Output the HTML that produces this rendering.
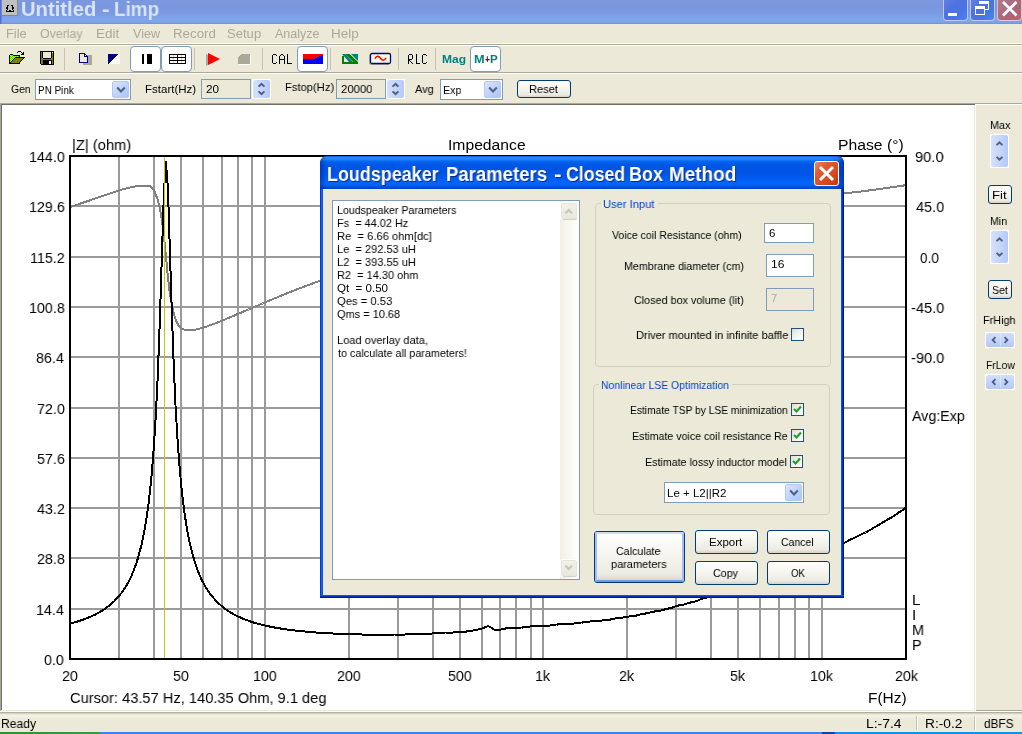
<!DOCTYPE html>
<html>
<head>
<meta charset="utf-8">
<title>Untitled - Limp</title>
<style>
html,body{margin:0;padding:0;background:#ece9d8;overflow:hidden;}
body{width:1022px;height:734px;position:relative;font-family:"Liberation Sans",sans-serif;}
#root{position:absolute;left:0;top:0;width:1022px;height:734px;overflow:hidden;background:#ece9d8;}
.t{position:absolute;white-space:pre;will-change:transform;line-height:20px;height:20px;font-family:"Liberation Sans",sans-serif;}
.abs{position:absolute;}
svg{position:absolute;overflow:visible;}
.btn{position:absolute;box-sizing:border-box;border:1px solid #003c74;border-radius:3px;background:linear-gradient(to bottom,#ffffff 0%,#f6f5ef 45%,#ecebe2 85%,#d6d0c5 100%);}
.edit{position:absolute;box-sizing:border-box;border:1px solid #7f9db9;background:#fff;}
.grp{position:absolute;box-sizing:border-box;border:1px solid #d0d0bf;border-radius:4px;}
.chk{position:absolute;box-sizing:border-box;width:13px;height:13px;border:1px solid #1c5180;background:linear-gradient(135deg,#dcdcd7 0%,#f3f3ef 50%,#ffffff 100%);}
.dd{position:absolute;box-sizing:border-box;border:1px solid #b4c8f6;border-radius:2px;background:linear-gradient(135deg,#dae4fc 0%,#c3d3fa 50%,#a9c6f7 100%);}
.spin{position:absolute;box-sizing:border-box;border-radius:2px;background:linear-gradient(to right,#d5e0fb 0%,#c3d3fa 60%,#b6c8f5 100%);}
</style>
</head>
<body>
<div id="root">
<div class="" style="position:absolute;left:0px;top:0px;width:1022px;height:24px;background:linear-gradient(to bottom,#7c98de 0%,#7a96dd 30%,#7b9ae2 55%,#80a6ea 80%,#7fa2e6 92%,#7391dc 100%);"></div>
<div class="" style="position:absolute;left:0px;top:0px;width:1px;height:24px;background:#5a6cd0;"></div>
<div class="" style="position:absolute;left:1px;top:0px;width:1px;height:24px;background:#6f88dc;"></div>
<div class="" style="position:absolute;left:2px;top:0px;width:16px;height:16px;background:#c0c0c0;border-right:1px solid #8c8c8c;border-bottom:1px solid #8a8678;box-sizing:border-box;"></div>
<svg style="left:6px;top:5px" width="8" height="7" viewBox="0 0 8 7" shape-rendering="crispEdges"><rect x="1" y="0" width="2" height="1" fill="#000"/><rect x="5" y="0" width="2" height="1" fill="#000"/><rect x="1" y="1" width="1" height="1" fill="#000"/><rect x="6" y="1" width="1" height="1" fill="#000"/><rect x="0" y="2" width="2" height="1" fill="#000"/><rect x="6" y="2" width="2" height="1" fill="#000"/><rect x="0" y="3" width="2" height="1" fill="#000"/><rect x="6" y="3" width="2" height="1" fill="#000"/><rect x="1" y="4" width="1" height="1" fill="#000"/><rect x="6" y="4" width="1" height="1" fill="#000"/><rect x="0" y="5" width="1" height="1" fill="#000"/><rect x="3" y="5" width="2" height="1" fill="#000"/><rect x="7" y="5" width="1" height="1" fill="#000"/><rect x="0" y="6" width="8" height="1" fill="#000"/></svg>
<div class="t " style="left:21.29px;top:-0.76px;font-size:19.5px;color:#d9e4f8;font-weight:bold;transform:scaleX(1.0371);transform-origin:0 0;">Untitled</div>
<div class="t " style="left:102.29px;top:-0.76px;font-size:19.5px;color:#d9e4f8;font-weight:bold;transform:scaleX(1.1664);transform-origin:0 0;">-</div>
<div class="t " style="left:113.97px;top:-0.76px;font-size:19.5px;color:#d9e4f8;font-weight:bold;transform:scaleX(0.9673);transform-origin:0 0;">Limp</div>
<div class="" style="position:absolute;left:943px;top:-5px;width:25px;height:26px;box-sizing:border-box;border:1px solid rgba(255,255,255,0.6);border-radius:4px;background:linear-gradient(135deg,#6484e6 0%,#4e72e0 40%,#4a74e4 70%,#4a82f0 100%);"></div>
<div class="" style="position:absolute;left:970px;top:-5px;width:25px;height:26px;box-sizing:border-box;border:1px solid rgba(255,255,255,0.6);border-radius:4px;background:linear-gradient(135deg,#6484e6 0%,#4e72e0 40%,#4a74e4 70%,#4a82f0 100%);"></div>
<div class="" style="position:absolute;left:997px;top:-5px;width:25px;height:26px;box-sizing:border-box;border:1px solid rgba(255,255,255,0.6);border-radius:4px;background:linear-gradient(135deg,#b47e92 0%,#b06c80 40%,#ac6476 70%,#b66a74 100%);"></div>
<svg style="left:943px;top:0" width="79" height="22" viewBox="0 0 79 22"><g shape-rendering="crispEdges" fill="#fff"><rect x="5" y="13" width="9" height="3"/><rect x="36" y="1" width="10" height="3"/><rect x="45" y="1" width="1" height="9"/><rect x="42" y="9" width="4" height="1"/><rect x="32" y="6" width="10" height="3"/><rect x="32" y="6" width="1" height="9"/><rect x="41" y="6" width="1" height="9"/><rect x="32" y="14" width="10" height="1"/></g><path d="M60 2L73.5 15.5M73.5 2L60 15.5" stroke="#fff" stroke-width="2.7" stroke-linecap="butt"/></svg>
<div class="t " style="left:5.98px;top:23.67px;font-size:12.5px;color:#aca899;transform:scaleX(1.0236);transform-origin:0 0;">File</div>
<div class="t " style="left:40.44px;top:23.67px;font-size:12.5px;color:#aca899;transform:scaleX(0.9882);transform-origin:0 0;">Overlay</div>
<div class="t " style="left:95.92px;top:23.67px;font-size:12.5px;color:#aca899;transform:scaleX(1.0765);transform-origin:0 0;">Edit</div>
<div class="t " style="left:132.94px;top:23.67px;font-size:12.5px;color:#aca899;transform:scaleX(1.0070);transform-origin:0 0;">View</div>
<div class="t " style="left:172.94px;top:23.67px;font-size:12.5px;color:#aca899;transform:scaleX(1.0649);transform-origin:0 0;">Record</div>
<div class="t " style="left:227.41px;top:23.67px;font-size:12.5px;color:#aca899;transform:scaleX(1.0455);transform-origin:0 0;">Setup</div>
<div class="t " style="left:275.00px;top:23.67px;font-size:12.5px;color:#aca899;transform:scaleX(1.0028);transform-origin:0 0;">Analyze</div>
<div class="t " style="left:330.93px;top:23.67px;font-size:12.5px;color:#aca899;transform:scaleX(1.0749);transform-origin:0 0;">Help</div>
<div class="" style="position:absolute;left:0px;top:43px;width:1022px;height:1px;background:#fff;"></div>
<div class="" style="position:absolute;left:0px;top:44px;width:1022px;height:1px;background:#aca899;"></div>
<div class="" style="position:absolute;left:0px;top:45px;width:1022px;height:1px;background:#fff;"></div>
<div class="" style="position:absolute;left:0px;top:72px;width:1022px;height:1px;background:#aca899;"></div>
<div class="" style="position:absolute;left:0px;top:73px;width:1022px;height:1px;background:#fff;"></div>
<svg style="left:9px;top:51px" width="16" height="13" viewBox="0 0 16 13" shape-rendering="crispEdges"><rect x="9" y="0" width="3" height="1" fill="#000"/><rect x="8" y="1" width="1" height="1" fill="#000"/><rect x="12" y="1" width="1" height="1" fill="#000"/><rect x="14" y="1" width="1" height="1" fill="#000"/><rect x="13" y="2" width="2" height="1" fill="#000"/><rect x="1" y="3" width="3" height="1" fill="#000"/><rect x="12" y="3" width="3" height="1" fill="#000"/><rect x="0" y="4" width="1" height="1" fill="#000"/><rect x="1" y="4" width="1" height="1" fill="#ffff00"/><rect x="2" y="4" width="1" height="1" fill="#00ff00"/><rect x="3" y="4" width="1" height="1" fill="#ffff00"/><rect x="4" y="4" width="7" height="1" fill="#000"/><rect x="0" y="5" width="1" height="1" fill="#000"/><rect x="1" y="5" width="1" height="1" fill="#00ff00"/><rect x="2" y="5" width="1" height="1" fill="#ffff00"/><rect x="3" y="5" width="1" height="1" fill="#00ff00"/><rect x="4" y="5" width="1" height="1" fill="#ffff00"/><rect x="5" y="5" width="1" height="1" fill="#00ff00"/><rect x="6" y="5" width="1" height="1" fill="#ffff00"/><rect x="7" y="5" width="1" height="1" fill="#00ff00"/><rect x="8" y="5" width="1" height="1" fill="#ffff00"/><rect x="9" y="5" width="1" height="1" fill="#00ff00"/><rect x="10" y="5" width="1" height="1" fill="#000"/><rect x="0" y="6" width="1" height="1" fill="#000"/><rect x="1" y="6" width="1" height="1" fill="#ffff00"/><rect x="2" y="6" width="1" height="1" fill="#00ff00"/><rect x="3" y="6" width="1" height="1" fill="#ffff00"/><rect x="4" y="6" width="1" height="1" fill="#00ff00"/><rect x="5" y="6" width="1" height="1" fill="#ffff00"/><rect x="6" y="6" width="10" height="1" fill="#000"/><rect x="0" y="7" width="1" height="1" fill="#000"/><rect x="1" y="7" width="1" height="1" fill="#00ff00"/><rect x="2" y="7" width="1" height="1" fill="#ffff00"/><rect x="3" y="7" width="1" height="1" fill="#00ff00"/><rect x="4" y="7" width="1" height="1" fill="#ffff00"/><rect x="5" y="7" width="1" height="1" fill="#000"/><rect x="6" y="7" width="8" height="1" fill="#808000"/><rect x="14" y="7" width="1" height="1" fill="#000"/><rect x="0" y="8" width="1" height="1" fill="#000"/><rect x="1" y="8" width="1" height="1" fill="#ffff00"/><rect x="2" y="8" width="1" height="1" fill="#00ff00"/><rect x="3" y="8" width="1" height="1" fill="#ffff00"/><rect x="4" y="8" width="1" height="1" fill="#000"/><rect x="5" y="8" width="8" height="1" fill="#808000"/><rect x="13" y="8" width="1" height="1" fill="#000"/><rect x="0" y="9" width="1" height="1" fill="#000"/><rect x="1" y="9" width="1" height="1" fill="#00ff00"/><rect x="2" y="9" width="1" height="1" fill="#ffff00"/><rect x="3" y="9" width="1" height="1" fill="#000"/><rect x="4" y="9" width="8" height="1" fill="#808000"/><rect x="12" y="9" width="1" height="1" fill="#000"/><rect x="0" y="10" width="1" height="1" fill="#000"/><rect x="1" y="10" width="1" height="1" fill="#ffff00"/><rect x="2" y="10" width="1" height="1" fill="#000"/><rect x="3" y="10" width="8" height="1" fill="#808000"/><rect x="11" y="10" width="1" height="1" fill="#000"/><rect x="0" y="11" width="2" height="1" fill="#000"/><rect x="2" y="11" width="8" height="1" fill="#808000"/><rect x="10" y="11" width="1" height="1" fill="#000"/><rect x="0" y="12" width="11" height="1" fill="#000"/></svg>
<svg style="left:40px;top:51px" width="14" height="14" viewBox="0 0 14 14" shape-rendering="crispEdges"><rect x="0" y="0" width="14" height="1" fill="#000"/><rect x="0" y="1" width="1" height="1" fill="#000"/><rect x="1" y="1" width="1" height="1" fill="#808000"/><rect x="2" y="1" width="1" height="1" fill="#000"/><rect x="11" y="1" width="1" height="1" fill="#000"/><rect x="12" y="1" width="1" height="1" fill="#fff"/><rect x="13" y="1" width="1" height="1" fill="#000"/><rect x="0" y="2" width="1" height="1" fill="#000"/><rect x="1" y="2" width="1" height="1" fill="#808000"/><rect x="2" y="2" width="1" height="1" fill="#000"/><rect x="11" y="2" width="1" height="1" fill="#000"/><rect x="12" y="2" width="1" height="1" fill="#808000"/><rect x="13" y="2" width="1" height="1" fill="#000"/><rect x="0" y="3" width="1" height="1" fill="#000"/><rect x="1" y="3" width="1" height="1" fill="#808000"/><rect x="2" y="3" width="1" height="1" fill="#000"/><rect x="11" y="3" width="1" height="1" fill="#000"/><rect x="12" y="3" width="1" height="1" fill="#808000"/><rect x="13" y="3" width="1" height="1" fill="#000"/><rect x="0" y="4" width="1" height="1" fill="#000"/><rect x="1" y="4" width="1" height="1" fill="#808000"/><rect x="2" y="4" width="1" height="1" fill="#000"/><rect x="11" y="4" width="1" height="1" fill="#000"/><rect x="12" y="4" width="1" height="1" fill="#808000"/><rect x="13" y="4" width="1" height="1" fill="#000"/><rect x="0" y="5" width="1" height="1" fill="#000"/><rect x="1" y="5" width="1" height="1" fill="#808000"/><rect x="2" y="5" width="1" height="1" fill="#000"/><rect x="11" y="5" width="1" height="1" fill="#000"/><rect x="12" y="5" width="1" height="1" fill="#808000"/><rect x="13" y="5" width="1" height="1" fill="#000"/><rect x="0" y="6" width="1" height="1" fill="#000"/><rect x="1" y="6" width="1" height="1" fill="#808000"/><rect x="2" y="6" width="1" height="1" fill="#000"/><rect x="11" y="6" width="1" height="1" fill="#000"/><rect x="12" y="6" width="1" height="1" fill="#808000"/><rect x="13" y="6" width="1" height="1" fill="#000"/><rect x="0" y="7" width="1" height="1" fill="#000"/><rect x="1" y="7" width="2" height="1" fill="#808000"/><rect x="3" y="7" width="8" height="1" fill="#000"/><rect x="11" y="7" width="2" height="1" fill="#808000"/><rect x="13" y="7" width="1" height="1" fill="#000"/><rect x="0" y="8" width="1" height="1" fill="#000"/><rect x="1" y="8" width="12" height="1" fill="#808000"/><rect x="13" y="8" width="1" height="1" fill="#000"/><rect x="0" y="9" width="1" height="1" fill="#000"/><rect x="1" y="9" width="2" height="1" fill="#808000"/><rect x="3" y="9" width="9" height="1" fill="#000"/><rect x="12" y="9" width="1" height="1" fill="#808000"/><rect x="13" y="9" width="1" height="1" fill="#000"/><rect x="0" y="10" width="1" height="1" fill="#000"/><rect x="1" y="10" width="2" height="1" fill="#808000"/><rect x="3" y="10" width="6" height="1" fill="#000"/><rect x="9" y="10" width="2" height="1" fill="#fff"/><rect x="11" y="10" width="1" height="1" fill="#000"/><rect x="12" y="10" width="1" height="1" fill="#808000"/><rect x="13" y="10" width="1" height="1" fill="#000"/><rect x="0" y="11" width="1" height="1" fill="#000"/><rect x="1" y="11" width="2" height="1" fill="#808000"/><rect x="3" y="11" width="6" height="1" fill="#000"/><rect x="9" y="11" width="2" height="1" fill="#fff"/><rect x="11" y="11" width="1" height="1" fill="#000"/><rect x="12" y="11" width="1" height="1" fill="#808000"/><rect x="13" y="11" width="1" height="1" fill="#000"/><rect x="0" y="12" width="1" height="1" fill="#000"/><rect x="1" y="12" width="2" height="1" fill="#808000"/><rect x="3" y="12" width="6" height="1" fill="#000"/><rect x="9" y="12" width="2" height="1" fill="#fff"/><rect x="11" y="12" width="1" height="1" fill="#000"/><rect x="12" y="12" width="1" height="1" fill="#808000"/><rect x="13" y="12" width="1" height="1" fill="#000"/><rect x="1" y="13" width="13" height="1" fill="#000"/></svg>
<div class="" style="position:absolute;left:64px;top:48px;width:1px;height:22px;background:#c5c2ae;"></div>
<svg style="left:79px;top:53px" width="13" height="12" viewBox="0 0 13 12" shape-rendering="crispEdges"><rect x="0" y="0" width="6" height="1" fill="#000080"/><rect x="0" y="1" width="1" height="1" fill="#000080"/><rect x="5" y="1" width="2" height="1" fill="#000080"/><rect x="0" y="2" width="1" height="1" fill="#000080"/><rect x="5" y="2" width="1" height="1" fill="#000080"/><rect x="7" y="2" width="1" height="1" fill="#000080"/><rect x="8" y="2" width="5" height="1" fill="#aca899"/><rect x="0" y="3" width="1" height="1" fill="#000080"/><rect x="5" y="3" width="4" height="1" fill="#000080"/><rect x="9" y="3" width="4" height="1" fill="#aca899"/><rect x="0" y="4" width="1" height="1" fill="#000080"/><rect x="8" y="4" width="1" height="1" fill="#000080"/><rect x="9" y="4" width="4" height="1" fill="#aca899"/><rect x="0" y="5" width="1" height="1" fill="#000080"/><rect x="8" y="5" width="1" height="1" fill="#000080"/><rect x="9" y="5" width="4" height="1" fill="#aca899"/><rect x="0" y="6" width="1" height="1" fill="#000080"/><rect x="8" y="6" width="1" height="1" fill="#000080"/><rect x="9" y="6" width="4" height="1" fill="#aca899"/><rect x="0" y="7" width="1" height="1" fill="#000080"/><rect x="8" y="7" width="1" height="1" fill="#000080"/><rect x="9" y="7" width="4" height="1" fill="#aca899"/><rect x="0" y="8" width="1" height="1" fill="#000080"/><rect x="8" y="8" width="1" height="1" fill="#000080"/><rect x="9" y="8" width="4" height="1" fill="#aca899"/><rect x="0" y="9" width="9" height="1" fill="#000080"/><rect x="9" y="9" width="4" height="1" fill="#aca899"/><rect x="4" y="10" width="9" height="1" fill="#aca899"/><rect x="4" y="11" width="9" height="1" fill="#aca899"/></svg>
<svg style="left:108px;top:54px" width="12" height="10" viewBox="0 0 12 10" shape-rendering="crispEdges"><rect width="12" height="10" fill="#fff"/><path d="M0 0H10L0 10Z" fill="#000080"/></svg>
<div class="" style="position:absolute;left:130px;top:46px;width:31px;height:26px;box-sizing:border-box;border:1px solid #7f9db9;border-radius:4px;background:#fff;"></div>
<div class="" style="position:absolute;left:161px;top:46px;width:31px;height:26px;box-sizing:border-box;border:1px solid #7f9db9;border-radius:4px;background:#fff;"></div>
<div class="" style="position:absolute;left:142px;top:54px;width:2px;height:10px;background:#000;"></div>
<div class="" style="position:absolute;left:147px;top:54px;width:5px;height:10px;background:#000;"></div>
<svg style="left:169px;top:54px" width="17" height="10" viewBox="0 0 17 10" shape-rendering="crispEdges"><rect x="0" y="0" width="17" height="1" fill="#000"/><rect x="0" y="1" width="1" height="1" fill="#000"/><rect x="1" y="1" width="3" height="1" fill="#fff"/><rect x="4" y="1" width="1" height="1" fill="#d8d4c0"/><rect x="5" y="1" width="3" height="1" fill="#fff"/><rect x="8" y="1" width="1" height="1" fill="#000"/><rect x="9" y="1" width="3" height="1" fill="#fff"/><rect x="12" y="1" width="1" height="1" fill="#d8d4c0"/><rect x="13" y="1" width="3" height="1" fill="#fff"/><rect x="16" y="1" width="1" height="1" fill="#000"/><rect x="0" y="2" width="1" height="1" fill="#000"/><rect x="1" y="2" width="3" height="1" fill="#fff"/><rect x="4" y="2" width="1" height="1" fill="#d8d4c0"/><rect x="5" y="2" width="3" height="1" fill="#fff"/><rect x="8" y="2" width="1" height="1" fill="#000"/><rect x="9" y="2" width="3" height="1" fill="#fff"/><rect x="12" y="2" width="1" height="1" fill="#d8d4c0"/><rect x="13" y="2" width="3" height="1" fill="#fff"/><rect x="16" y="2" width="1" height="1" fill="#000"/><rect x="0" y="3" width="17" height="1" fill="#000"/><rect x="0" y="4" width="1" height="1" fill="#000"/><rect x="1" y="4" width="3" height="1" fill="#fff"/><rect x="4" y="4" width="1" height="1" fill="#d8d4c0"/><rect x="5" y="4" width="3" height="1" fill="#fff"/><rect x="8" y="4" width="1" height="1" fill="#000"/><rect x="9" y="4" width="3" height="1" fill="#fff"/><rect x="12" y="4" width="1" height="1" fill="#d8d4c0"/><rect x="13" y="4" width="3" height="1" fill="#fff"/><rect x="16" y="4" width="1" height="1" fill="#000"/><rect x="0" y="5" width="1" height="1" fill="#000"/><rect x="1" y="5" width="3" height="1" fill="#fff"/><rect x="4" y="5" width="1" height="1" fill="#d8d4c0"/><rect x="5" y="5" width="3" height="1" fill="#fff"/><rect x="8" y="5" width="1" height="1" fill="#000"/><rect x="9" y="5" width="3" height="1" fill="#fff"/><rect x="12" y="5" width="1" height="1" fill="#d8d4c0"/><rect x="13" y="5" width="3" height="1" fill="#fff"/><rect x="16" y="5" width="1" height="1" fill="#000"/><rect x="0" y="6" width="17" height="1" fill="#000"/><rect x="0" y="7" width="1" height="1" fill="#000"/><rect x="1" y="7" width="3" height="1" fill="#fff"/><rect x="4" y="7" width="1" height="1" fill="#d8d4c0"/><rect x="5" y="7" width="3" height="1" fill="#fff"/><rect x="8" y="7" width="1" height="1" fill="#000"/><rect x="9" y="7" width="3" height="1" fill="#fff"/><rect x="12" y="7" width="1" height="1" fill="#d8d4c0"/><rect x="13" y="7" width="3" height="1" fill="#fff"/><rect x="16" y="7" width="1" height="1" fill="#000"/><rect x="0" y="8" width="1" height="1" fill="#000"/><rect x="1" y="8" width="3" height="1" fill="#fff"/><rect x="4" y="8" width="1" height="1" fill="#d8d4c0"/><rect x="5" y="8" width="3" height="1" fill="#fff"/><rect x="8" y="8" width="1" height="1" fill="#000"/><rect x="9" y="8" width="3" height="1" fill="#fff"/><rect x="12" y="8" width="1" height="1" fill="#d8d4c0"/><rect x="13" y="8" width="3" height="1" fill="#fff"/><rect x="16" y="8" width="1" height="1" fill="#000"/><rect x="0" y="9" width="17" height="1" fill="#000"/></svg>
<div class="" style="position:absolute;left:194px;top:48px;width:1px;height:22px;background:#c5c2ae;"></div>
<svg style="left:204px;top:52px" width="18" height="15" viewBox="0 0 18 15"><path d="M2 2L14 8L2 14Z" fill="#aca899"/><path d="M4 1L16 7L4 13Z" fill="#ff0000"/></svg>
<svg style="left:238px;top:54px" width="14" height="12" viewBox="0 0 14 12" shape-rendering="crispEdges"><path d="M4 1H13V11H1V4Z" fill="#fff"/><path d="M3 0H12V10H0V3Z" fill="#aca899"/></svg>
<div class="" style="position:absolute;left:262px;top:48px;width:1px;height:22px;background:#c5c2ae;"></div>
<svg style="left:272px;top:54px" width="5" height="10" viewBox="0 0 5 10" shape-rendering="crispEdges"><rect x="1" y="0" width="3" height="1" fill="#000"/><rect x="0" y="1" width="1" height="1" fill="#000"/><rect x="4" y="1" width="1" height="1" fill="#000"/><rect x="0" y="2" width="1" height="1" fill="#000"/><rect x="0" y="3" width="1" height="1" fill="#000"/><rect x="0" y="4" width="1" height="1" fill="#000"/><rect x="0" y="5" width="1" height="1" fill="#000"/><rect x="0" y="6" width="1" height="1" fill="#000"/><rect x="0" y="7" width="1" height="1" fill="#000"/><rect x="0" y="8" width="1" height="1" fill="#000"/><rect x="4" y="8" width="1" height="1" fill="#000"/><rect x="1" y="9" width="3" height="1" fill="#000"/></svg>
<svg style="left:279px;top:54px" width="6" height="10" viewBox="0 0 6 10" shape-rendering="crispEdges"><rect x="2" y="0" width="2" height="1" fill="#000"/><rect x="1" y="1" width="1" height="1" fill="#000"/><rect x="4" y="1" width="1" height="1" fill="#000"/><rect x="0" y="2" width="1" height="1" fill="#000"/><rect x="5" y="2" width="1" height="1" fill="#000"/><rect x="0" y="3" width="1" height="1" fill="#000"/><rect x="5" y="3" width="1" height="1" fill="#000"/><rect x="0" y="4" width="1" height="1" fill="#000"/><rect x="5" y="4" width="1" height="1" fill="#000"/><rect x="0" y="5" width="6" height="1" fill="#000"/><rect x="0" y="6" width="1" height="1" fill="#000"/><rect x="5" y="6" width="1" height="1" fill="#000"/><rect x="0" y="7" width="1" height="1" fill="#000"/><rect x="5" y="7" width="1" height="1" fill="#000"/><rect x="0" y="8" width="1" height="1" fill="#000"/><rect x="5" y="8" width="1" height="1" fill="#000"/><rect x="0" y="9" width="1" height="1" fill="#000"/><rect x="5" y="9" width="1" height="1" fill="#000"/></svg>
<svg style="left:287px;top:54px" width="5" height="10" viewBox="0 0 5 10" shape-rendering="crispEdges"><rect x="0" y="0" width="1" height="1" fill="#000"/><rect x="0" y="1" width="1" height="1" fill="#000"/><rect x="0" y="2" width="1" height="1" fill="#000"/><rect x="0" y="3" width="1" height="1" fill="#000"/><rect x="0" y="4" width="1" height="1" fill="#000"/><rect x="0" y="5" width="1" height="1" fill="#000"/><rect x="0" y="6" width="1" height="1" fill="#000"/><rect x="0" y="7" width="1" height="1" fill="#000"/><rect x="0" y="8" width="1" height="1" fill="#000"/><rect x="0" y="9" width="5" height="1" fill="#000"/></svg>
<div class="" style="position:absolute;left:297px;top:46px;width:31px;height:26px;box-sizing:border-box;border:1px solid #7f9db9;border-radius:4px;background:#fff;"></div>
<svg style="left:303px;top:54px" width="20" height="10" viewBox="0 0 20 10" shape-rendering="crispEdges"><rect width="20" height="10" fill="#0000ff"/><path d="M0 0H20V1H18V2H16V3H14V4H12V5H0Z" fill="#ff0000"/></svg>
<div class="" style="position:absolute;left:330px;top:48px;width:1px;height:22px;background:#c5c2ae;"></div>
<svg style="left:342px;top:54px" width="16" height="10" viewBox="0 0 16 10"><path d="M9 0H16V7Z" fill="#008080"/><path d="M0 0H3.5L11 8H7Z" fill="#008080"/><path d="M3.5 0H7.5L16 8V10H13.5Z" fill="#008000"/><rect x="0" y="2" width="2" height="8" fill="#008000"/><rect x="0" y="8" width="16" height="2" fill="#008000"/></svg>
<svg style="left:368px;top:52px" width="24" height="14" viewBox="0 0 24 14"><rect x="1.5" y="2.5" width="20" height="10" rx="1.5" fill="none" stroke="#aca899" stroke-width="1"/><rect x="2.5" y="1.5" width="20" height="10" rx="1.5" fill="#fbfbe6" stroke="#00008a" stroke-width="1.3"/><path d="M7 6.8C8.5 3.5 10.5 3.5 12.5 6.2S16.5 9 18 5.8" fill="none" stroke="#ff0000" stroke-width="1.5"/></svg>
<div class="" style="position:absolute;left:398px;top:48px;width:1px;height:22px;background:#c5c2ae;"></div>
<svg style="left:408px;top:54px" width="5" height="10" viewBox="0 0 5 10" shape-rendering="crispEdges"><rect x="1" y="0" width="3" height="1" fill="#000"/><rect x="0" y="1" width="1" height="1" fill="#000"/><rect x="4" y="1" width="1" height="1" fill="#000"/><rect x="0" y="2" width="1" height="1" fill="#000"/><rect x="4" y="2" width="1" height="1" fill="#000"/><rect x="0" y="3" width="1" height="1" fill="#000"/><rect x="4" y="3" width="1" height="1" fill="#000"/><rect x="0" y="4" width="1" height="1" fill="#000"/><rect x="4" y="4" width="1" height="1" fill="#000"/><rect x="0" y="5" width="4" height="1" fill="#000"/><rect x="0" y="6" width="2" height="1" fill="#000"/><rect x="0" y="7" width="1" height="1" fill="#000"/><rect x="2" y="7" width="1" height="1" fill="#000"/><rect x="0" y="8" width="1" height="1" fill="#000"/><rect x="3" y="8" width="1" height="1" fill="#000"/><rect x="0" y="9" width="1" height="1" fill="#000"/><rect x="4" y="9" width="1" height="1" fill="#000"/></svg>
<svg style="left:416px;top:54px" width="4" height="10" viewBox="0 0 4 10" shape-rendering="crispEdges"><rect x="0" y="0" width="1" height="1" fill="#000"/><rect x="0" y="1" width="1" height="1" fill="#000"/><rect x="0" y="2" width="1" height="1" fill="#000"/><rect x="0" y="3" width="1" height="1" fill="#000"/><rect x="0" y="4" width="1" height="1" fill="#000"/><rect x="0" y="5" width="1" height="1" fill="#000"/><rect x="0" y="6" width="1" height="1" fill="#000"/><rect x="0" y="7" width="1" height="1" fill="#000"/><rect x="0" y="8" width="1" height="1" fill="#000"/><rect x="0" y="9" width="4" height="1" fill="#000"/></svg>
<svg style="left:422px;top:54px" width="5" height="10" viewBox="0 0 5 10" shape-rendering="crispEdges"><rect x="1" y="0" width="3" height="1" fill="#000"/><rect x="0" y="1" width="1" height="1" fill="#000"/><rect x="4" y="1" width="1" height="1" fill="#000"/><rect x="0" y="2" width="1" height="1" fill="#000"/><rect x="0" y="3" width="1" height="1" fill="#000"/><rect x="0" y="4" width="1" height="1" fill="#000"/><rect x="0" y="5" width="1" height="1" fill="#000"/><rect x="0" y="6" width="1" height="1" fill="#000"/><rect x="0" y="7" width="1" height="1" fill="#000"/><rect x="0" y="8" width="1" height="1" fill="#000"/><rect x="4" y="8" width="1" height="1" fill="#000"/><rect x="1" y="9" width="3" height="1" fill="#000"/></svg>
<div class="" style="position:absolute;left:435px;top:48px;width:1px;height:22px;background:#c5c2ae;"></div>
<div class="t " style="left:442.22px;top:49.01px;font-size:11.5px;color:#008080;font-weight:bold;transform:scaleX(1.0463);transform-origin:0 0;">Mag</div>
<div class="" style="position:absolute;left:470px;top:46px;width:31px;height:26px;box-sizing:border-box;border:1px solid #7f9db9;border-radius:4px;background:#fff;"></div>
<div class="t " style="left:474.17px;top:49.01px;font-size:11.5px;color:#008080;font-weight:bold;transform:scaleX(1.1056);transform-origin:0 0;">M</div>
<div class="t " style="left:484.65px;top:49.01px;font-size:11.5px;color:#800000;font-weight:bold;transform:scaleX(0.7576);transform-origin:0 0;">+</div>
<div class="t " style="left:489.65px;top:49.01px;font-size:11.5px;color:#008080;font-weight:bold;transform:scaleX(1.0069);transform-origin:0 0;">P</div>
<div class="t " style="left:11.48px;top:79.01px;font-size:11.5px;color:#000;transform:scaleX(0.9063);transform-origin:0 0;">Gen</div>
<div class="edit" style="left:35px;top:79px;width:96px;height:21px"></div>
<div class="dd" style="left:112px;top:81px;width:17px;height:17px"></div>
<svg style="left:115.5px;top:86.0px" width="10" height="8" viewBox="0 0 10 8"><path d="M1.2 1.6L5 5.4L8.8 1.6" fill="none" stroke="#4d6185" stroke-width="2.1"/></svg>
<div class="t " style="left:37.71px;top:80.01px;font-size:11.5px;color:#000;transform:scaleX(0.8622);transform-origin:0 0;">PN Pink</div>
<div class="t " style="left:145.08px;top:79.01px;font-size:11.5px;color:#000;transform:scaleX(1.0010);transform-origin:0 0;">Fstart(Hz)</div>
<div class="edit" style="left:201px;top:79px;width:50px;height:20px;background:#ece9d8"></div>
<div class="t " style="left:205.91px;top:79.01px;font-size:11.5px;color:#000;transform:scaleX(1.0180);transform-origin:0 0;">20</div>
<div class="" style="position:absolute;left:252px;top:79px;width:19px;height:20px;background:#fff;"></div>
<div class="spin" style="left:253px;top:80px;width:17px;height:18px;"></div>
<svg style="left:0;top:0" width="1022" height="734" viewBox="0 0 1022 734"><path d="M257.90 86.00L259.20 87.30L261.50 85.20L263.80 87.30L265.10 86.00L261.50 82.50Z" fill="#4d6185"/><path d="M257.90 92.00L259.20 90.70L261.50 92.80L263.80 90.70L265.10 92.00L261.50 95.50Z" fill="#4d6185"/></svg>
<div class="t " style="left:285.10px;top:77.01px;font-size:11.5px;color:#000;transform:scaleX(0.9730);transform-origin:0 0;">Fstop(Hz)</div>
<div class="edit" style="left:336px;top:79px;width:50px;height:20px;background:#ece9d8"></div>
<div class="t " style="left:341.43px;top:79.01px;font-size:11.5px;color:#000;transform:scaleX(0.9841);transform-origin:0 0;">20000</div>
<div class="" style="position:absolute;left:386px;top:79px;width:19px;height:20px;background:#fff;"></div>
<div class="spin" style="left:387px;top:80px;width:17px;height:18px;"></div>
<svg style="left:0;top:0" width="1022" height="734" viewBox="0 0 1022 734"><path d="M391.90 86.00L393.20 87.30L395.50 85.20L397.80 87.30L399.10 86.00L395.50 82.50Z" fill="#4d6185"/><path d="M391.90 92.00L393.20 90.70L395.50 92.80L397.80 90.70L399.10 92.00L395.50 95.50Z" fill="#4d6185"/></svg>
<div class="t " style="left:415.00px;top:79.01px;font-size:11.5px;color:#000;transform:scaleX(0.9544);transform-origin:0 0;">Avg</div>
<div class="edit" style="left:440px;top:79px;width:63px;height:21px"></div>
<div class="dd" style="left:484px;top:81px;width:17px;height:17px"></div>
<svg style="left:487.5px;top:86.0px" width="10" height="8" viewBox="0 0 10 8"><path d="M1.2 1.6L5 5.4L8.8 1.6" fill="none" stroke="#4d6185" stroke-width="2.1"/></svg>
<div class="t " style="left:443.15px;top:80.01px;font-size:11.5px;color:#000;transform:scaleX(0.9239);transform-origin:0 0;">Exp</div>
<div class="btn" style="left:517px;top:80px;width:54px;height:18px"></div>
<div class="t " style="left:528.61px;top:79.01px;font-size:11.5px;color:#000;transform:scaleX(0.9643);transform-origin:0 0;">Reset</div>
<div class="" style="position:absolute;left:0px;top:103px;width:976px;height:1px;background:#aca899;"></div>
<div class="" style="position:absolute;left:0px;top:104px;width:975px;height:1px;background:#716f64;"></div>
<div class="" style="position:absolute;left:0px;top:104px;width:1px;height:607px;background:#aca899;"></div>
<div class="" style="position:absolute;left:1px;top:104px;width:1px;height:606px;background:#716f64;"></div>
<div class="" style="position:absolute;left:2px;top:105px;width:972px;height:605px;background:#fff;"></div>
<div class="" style="position:absolute;left:975px;top:104px;width:1px;height:607px;background:#fff;"></div>
<div class="" style="position:absolute;left:1px;top:710px;width:974px;height:1px;background:#ece9d8;"></div>
<div class="" style="position:absolute;left:0px;top:711px;width:1022px;height:1px;background:#fff;"></div>
<div class="" style="position:absolute;left:976px;top:103px;width:46px;height:1px;background:#aca899;"></div>
<div class="" style="position:absolute;left:976px;top:104px;width:46px;height:1px;background:#fff;"></div>
<div class="" style="position:absolute;left:976px;top:710px;width:46px;height:1px;background:#aca899;"></div>
<svg style="left:0;top:0" width="1022" height="734" viewBox="0 0 1022 734"><g shape-rendering="crispEdges" fill="#9a9a9a"><rect x="118" y="157" width="2" height="501"/><rect x="153" y="157" width="2" height="501"/><rect x="180" y="157" width="2" height="501"/><rect x="202" y="157" width="2" height="501"/><rect x="221" y="157" width="2" height="501"/><rect x="237" y="157" width="2" height="501"/><rect x="251" y="157" width="2" height="501"/><rect x="264" y="157" width="2" height="501"/><rect x="348" y="157" width="2" height="501"/><rect x="397" y="157" width="2" height="501"/><rect x="432" y="157" width="2" height="501"/><rect x="459" y="157" width="2" height="501"/><rect x="481" y="157" width="2" height="501"/><rect x="499" y="157" width="2" height="501"/><rect x="515" y="157" width="2" height="501"/><rect x="530" y="157" width="2" height="501"/><rect x="542" y="157" width="2" height="501"/><rect x="626" y="157" width="2" height="501"/><rect x="675" y="157" width="2" height="501"/><rect x="710" y="157" width="2" height="501"/><rect x="737" y="157" width="2" height="501"/><rect x="759" y="157" width="2" height="501"/><rect x="778" y="157" width="2" height="501"/><rect x="794" y="157" width="2" height="501"/><rect x="808" y="157" width="2" height="501"/><rect x="821" y="157" width="2" height="501"/><rect x="71" y="205" width="834" height="2"/><rect x="71" y="256" width="834" height="2"/><rect x="71" y="306" width="834" height="2"/><rect x="71" y="356" width="834" height="2"/><rect x="71" y="407" width="834" height="2"/><rect x="71" y="457" width="834" height="2"/><rect x="71" y="507" width="834" height="2"/><rect x="71" y="557" width="834" height="2"/><rect x="71" y="608" width="834" height="2"/></g><polyline points="70.0,207.0 74.4,205.6 78.6,204.2 82.6,202.8 86.5,201.5 90.3,200.2 94.0,198.9 97.6,197.7 101.1,196.5 104.5,195.3 107.8,194.2 111.0,193.1 114.1,192.1 117.1,191.1 120.1,190.2 123.0,189.3 125.8,188.5 128.6,187.8 131.3,187.2 133.9,186.7 136.5,186.3 139.0,186.1 141.5,186.0 143.9,186.0 146.3,185.9 148.7,185.9 151.0,186.6 153.2,189.1 155.4,193.4 157.6,199.5 159.7,207.6 161.8,219.1 163.9,235.5 165.9,256.0 167.9,276.6 169.8,293.1 171.8,304.9 173.7,313.2 175.5,319.1 177.4,323.4 179.2,326.4 181.0,328.2 182.7,329.2 184.5,329.6 186.2,329.9 187.8,330.0 189.5,330.1 191.2,330.1 192.8,330.0 194.4,329.8 195.9,329.5 197.5,329.2 199.0,328.8 200.5,328.4 202.0,328.0 203.5,327.5 205.0,327.0 206.4,326.6 207.9,326.1 209.3,325.5 210.7,325.0 212.0,324.5 213.4,324.0 214.8,323.5 216.1,323.0 217.4,322.5 218.7,322.0 220.0,321.5 221.3,320.9 222.5,320.4 223.8,319.9 225.0,319.4 226.2,318.9 227.5,318.4 228.7,317.9 229.9,317.4 231.0,316.9 232.2,316.4 233.3,315.9 234.5,315.5 235.6,315.0 236.7,314.5 237.9,314.0 239.0,313.6 240.1,313.1 241.1,312.6 242.2,312.2 243.3,311.7 244.3,311.2 245.4,310.8 246.4,310.3 247.4,309.9 248.5,309.5 249.5,309.0 250.5,308.6 251.5,308.2 252.5,307.7 253.5,307.3 254.5,306.9 255.5,306.5 256.5,306.0 257.5,305.6 258.5,305.2 259.5,304.7 260.5,304.3 261.5,303.9 262.5,303.5 263.5,303.0 264.5,302.6 265.5,302.2 266.5,301.8 267.5,301.3 268.5,300.9 269.5,300.5 270.5,300.1 271.5,299.7 272.5,299.2 273.5,298.8 274.5,298.4 275.5,298.0 276.5,297.6 277.5,297.2 278.5,296.8 279.5,296.3 280.5,295.9 281.5,295.5 282.5,295.1 283.5,294.7 284.5,294.3 285.5,293.9 286.5,293.5 287.5,293.1 288.5,292.7 289.5,292.3 290.5,291.9 291.5,291.5 292.5,291.1 293.5,290.7 294.5,290.3 295.5,289.9 296.5,289.5 297.5,289.1 298.5,288.8 299.5,288.4 300.5,288.0 301.5,287.6 302.5,287.2 303.5,286.8 304.5,286.5 305.5,286.1 306.5,285.7 307.5,285.3 308.5,284.9 309.5,284.6 310.5,284.2 311.5,283.8 312.5,283.5 313.5,283.1 314.5,282.7 315.5,282.4 316.5,282.0 317.5,281.6 318.5,281.3 319.5,280.9 320.5,280.5 321.5,280.2 322.5,279.8 323.5,279.5 324.5,279.1 325.5,278.8 326.5,278.4 327.5,278.1 328.5,277.7 329.5,277.4 330.5,277.0 331.5,276.7 332.5,276.3 333.5,276.0 334.5,275.7 335.5,275.3 336.5,275.0 337.5,274.6 338.5,274.3 339.5,274.0 340.5,273.7 341.5,273.3 342.5,273.0 343.5,272.7 344.5,272.3 345.5,272.0 346.5,271.7 347.5,271.4 348.5,271.0 349.5,270.7 350.5,270.4 351.5,270.1 352.5,269.8 353.5,269.5 354.5,269.1 355.5,268.8 356.5,268.5 357.5,268.2 358.5,267.9 359.5,267.6 360.5,267.3 361.5,267.0 362.5,266.7 363.5,266.4 364.5,266.1 365.5,265.8 366.5,265.5 367.5,265.2 368.5,264.9 369.5,264.6 370.5,264.3 371.5,264.0 372.5,263.7 373.5,263.5 374.5,263.2 375.5,262.9 376.5,262.6 377.5,262.3 378.5,262.0 379.5,261.8 380.5,261.5 381.5,261.2 382.5,260.9 383.5,260.6 384.5,260.4 385.5,260.1 386.5,259.8 387.5,259.5 388.5,259.3 389.5,259.0 390.5,258.7 391.5,258.5 392.5,258.2 393.5,257.9 394.5,257.7 395.5,257.4 396.5,257.1 397.5,256.9 398.5,256.6 399.5,256.4 400.5,256.1 401.5,255.9 402.5,255.6 403.5,255.3 404.5,255.1 405.5,254.8 406.5,254.6 407.5,254.3 408.5,254.1 409.5,253.8 410.5,253.6 411.5,253.3 412.5,253.1 413.5,252.8 414.5,252.6 415.5,252.4 416.5,252.1 417.5,251.9 418.5,251.6 419.5,251.4 420.5,251.1 421.5,250.9 422.5,250.7 423.5,250.4 424.5,250.2 425.5,250.0 426.5,249.7 427.5,249.5 428.5,249.3 429.5,249.0 430.5,248.8 431.5,248.6 432.5,248.3 433.5,248.1 434.5,247.9 435.5,247.6 436.5,247.4 437.5,247.2 438.5,246.9 439.5,246.7 440.5,246.5 441.5,246.3 442.5,246.0 443.5,245.8 444.5,245.6 445.5,245.4 446.5,245.1 447.5,244.9 448.5,244.7 449.5,244.5 450.5,244.2 451.5,244.0 452.5,243.8 453.5,243.6 454.5,243.3 455.5,243.1 456.5,242.9 457.5,242.7 458.5,242.5 459.5,242.2 460.5,242.0 461.5,241.8 462.5,241.6 463.5,241.4 464.5,241.1 465.5,240.9 466.5,240.7 467.5,240.5 468.5,240.3 469.5,240.0 470.5,239.8 471.5,239.6 472.5,239.4 473.5,239.2 474.5,239.0 475.5,238.7 476.5,238.5 477.5,238.3 478.5,238.1 479.5,237.9 480.5,237.6 481.5,237.4 482.5,237.2 483.5,237.0 484.5,236.8 485.5,236.6 486.5,236.3 487.5,236.1 488.5,235.9 489.5,235.7 490.5,235.5 491.5,235.2 492.5,235.0 493.5,234.8 494.5,234.6 495.5,234.4 496.5,234.2 497.5,233.9 498.5,233.7 499.5,233.5 500.5,233.3 501.5,233.1 502.5,232.8 503.5,232.6 504.5,232.4 505.5,232.2 506.5,232.0 507.5,231.8 508.5,231.5 509.5,231.3 510.5,231.1 511.5,230.9 512.5,230.7 513.5,230.4 514.5,230.2 515.5,230.0 516.5,229.8 517.5,229.6 518.5,229.3 519.5,229.1 520.5,228.9 521.5,228.7 522.5,228.5 523.5,228.2 524.5,228.0 525.5,227.8 526.5,227.6 527.5,227.3 528.5,227.1 529.5,226.9 530.5,226.7 531.5,226.5 532.5,226.2 533.5,226.0 534.5,225.8 535.5,225.6 536.5,225.4 537.5,225.1 538.5,224.9 539.5,224.7 540.5,224.5 541.5,224.3 542.5,224.0 543.5,223.8 544.5,223.6 545.5,223.4 546.5,223.2 547.5,222.9 548.5,222.7 549.5,222.5 550.5,222.3 551.5,222.1 552.5,221.8 553.5,221.6 554.5,221.4 555.5,221.2 556.5,221.0 557.5,220.8 558.5,220.5 559.5,220.3 560.5,220.1 561.5,219.9 562.5,219.7 563.5,219.5 564.5,219.2 565.5,219.0 566.5,218.8 567.5,218.6 568.5,218.4 569.5,218.2 570.5,218.0 571.5,217.8 572.5,217.5 573.5,217.3 574.5,217.1 575.5,216.9 576.5,216.7 577.5,216.5 578.5,216.3 579.5,216.1 580.5,215.9 581.5,215.7 582.5,215.5 583.5,215.3 584.5,215.1 585.5,214.9 586.5,214.7 587.5,214.5 588.5,214.3 589.5,214.1 590.5,213.9 591.5,213.7 592.5,213.5 593.5,213.3 594.5,213.1 595.5,212.9 596.5,212.7 597.5,212.5 598.5,212.3 599.5,212.1 600.5,212.0 601.5,211.8 602.5,211.6 603.5,211.4 604.5,211.2 605.5,211.0 606.5,210.9 607.5,210.7 608.5,210.5 609.5,210.3 610.5,210.1 611.5,210.0 612.5,209.8 613.5,209.6 614.5,209.5 615.5,209.3 616.5,209.1 617.5,208.9 618.5,208.8 619.5,208.6 620.5,208.5 621.5,208.3 622.5,208.1 623.5,208.0 624.5,207.8 625.5,207.7 626.5,207.5 627.5,207.3 628.5,207.2 629.5,207.0 630.5,206.9 631.5,206.7 632.5,206.6 633.5,206.5 634.5,206.3 635.5,206.2 636.5,206.0 637.5,205.9 638.5,205.7 639.5,205.6 640.5,205.5 641.5,205.3 642.5,205.2 643.5,205.1 644.5,205.0 645.5,204.8 646.5,204.7 647.5,204.6 648.5,204.5 649.5,204.3 650.5,204.2 651.5,204.1 652.5,204.0 653.5,203.9 654.5,203.8 655.5,203.6 656.5,203.5 657.5,203.4 658.5,203.3 659.5,203.2 660.5,203.1 661.5,203.0 662.5,202.9 663.5,202.8 664.5,202.7 665.5,202.6 666.5,202.5 667.5,202.4 668.5,202.3 669.5,202.2 670.5,202.1 671.5,202.1 672.5,202.0 673.5,201.9 674.5,201.8 675.5,201.7 676.5,201.6 677.5,201.6 678.5,201.5 679.5,201.4 680.5,201.3 681.5,201.3 682.5,201.2 683.5,201.1 684.5,201.0 685.5,201.0 686.5,200.9 687.5,200.8 688.5,200.8 689.5,200.7 690.5,200.7 691.5,200.6 692.5,200.5 693.5,200.5 694.5,200.4 695.5,200.4 696.5,200.3 697.5,200.3 698.5,200.2 699.5,200.2 700.5,200.1 701.5,200.1 702.5,200.0 703.5,200.0 704.5,199.9 705.5,199.9 706.5,199.8 707.5,199.8 708.5,199.7 709.5,199.7 710.5,199.7 711.5,199.6 712.5,199.6 713.5,199.5 714.5,199.5 715.5,199.5 716.5,199.4 717.5,199.4 718.5,199.4 719.5,199.3 720.5,199.3 721.5,199.3 722.5,199.3 723.5,199.2 724.5,199.2 725.5,199.2 726.5,199.1 727.5,199.1 728.5,199.1 729.5,199.1 730.5,199.0 731.5,199.0 732.5,199.0 733.5,199.0 734.5,198.9 735.5,198.9 736.5,198.9 737.5,198.9 738.5,198.8 739.5,198.8 740.5,198.8 741.5,198.8 742.5,198.7 743.5,198.7 744.5,198.7 745.5,198.7 746.5,198.7 747.5,198.6 748.5,198.6 749.5,198.6 750.5,198.6 751.5,198.6 752.5,198.5 753.5,198.5 754.5,198.5 755.5,198.5 756.5,198.4 757.5,198.4 758.5,198.4 759.5,198.4 760.5,198.3 761.5,198.3 762.5,198.3 763.5,198.3 764.5,198.3 765.5,198.2 766.5,198.2 767.5,198.2 768.5,198.1 769.5,198.1 770.5,198.1 771.5,198.1 772.5,198.0 773.5,198.0 774.5,198.0 775.5,197.9 776.5,197.9 777.5,197.9 778.5,197.8 779.5,197.8 780.5,197.8 781.5,197.7 782.5,197.7 783.5,197.7 784.5,197.6 785.5,197.6 786.5,197.6 787.5,197.5 788.5,197.5 789.5,197.4 790.5,197.4 791.5,197.3 792.5,197.3 793.5,197.3 794.5,197.2 795.5,197.2 796.5,197.1 797.5,197.1 798.5,197.0 799.5,197.0 800.5,196.9 801.5,196.9 802.5,196.8 803.5,196.7 804.5,196.7 805.5,196.6 806.5,196.6 807.5,196.5 808.5,196.4 809.5,196.4 810.5,196.3 811.5,196.3 812.5,196.2 813.5,196.1 814.5,196.0 815.5,196.0 816.5,195.9 817.5,195.8 818.5,195.8 819.5,195.7 820.5,195.6 821.5,195.5 822.5,195.5 823.5,195.4 824.5,195.3 825.5,195.2 826.5,195.1 827.5,195.0 828.5,195.0 829.5,194.9 830.5,194.8 831.5,194.7 832.5,194.6 833.5,194.5 834.5,194.4 835.5,194.3 836.5,194.2 837.5,194.1 838.5,194.0 839.5,193.9 840.5,193.8 841.5,193.7 842.5,193.6 843.5,193.5 844.5,193.4 845.5,193.3 846.5,193.2 847.5,193.1 848.5,193.0 849.5,192.9 850.5,192.7 851.5,192.6 852.5,192.5 853.5,192.4 854.5,192.3 855.5,192.2 856.5,192.1 857.5,191.9 858.5,191.8 859.5,191.7 860.5,191.6 861.5,191.4 862.5,191.3 863.5,191.2 864.5,191.1 865.5,190.9 866.5,190.8 867.5,190.7 868.5,190.5 869.5,190.4 870.5,190.3 871.5,190.1 872.5,190.0 873.5,189.9 874.5,189.7 875.5,189.6 876.5,189.5 877.5,189.3 878.5,189.2 879.5,189.1 880.5,188.9 881.5,188.8 882.5,188.6 883.5,188.5 884.5,188.3 885.5,188.2 886.5,188.1 887.5,187.9 888.5,187.8 889.5,187.6 890.5,187.5 891.5,187.3 892.5,187.2 893.5,187.0 894.5,186.9 895.5,186.7 896.5,186.6 897.5,186.4 898.5,186.3 899.5,186.1 900.5,186.0 901.5,185.8 902.5,185.7 903.5,185.5 904.5,185.4 905.5,185.2 906.0,185.2" fill="none" stroke="#808080" stroke-width="2" stroke-linejoin="round" shape-rendering="crispEdges"/><polyline points="70.0,623.6 74.4,622.4 78.6,621.2 82.6,619.8 86.5,618.4 90.3,616.8 94.0,615.2 97.6,613.3 101.1,611.3 104.5,609.2 107.8,606.8 111.0,604.2 114.1,601.4 117.1,598.2 120.1,594.7 123.0,590.9 125.8,586.6 128.6,581.7 131.3,576.2 133.9,569.9 136.5,562.8 139.0,554.4 141.5,544.7 143.9,533.2 146.3,519.4 148.7,502.7 151.0,482.0 153.2,456.0 155.4,422.7 157.6,379.7 159.7,324.5 161.8,257.8 163.9,192.7 165.9,161.8 167.9,187.8 169.8,248.4 171.8,311.4 173.7,364.1 175.5,405.4 177.4,437.5 179.2,462.7 181.0,482.9 182.7,499.3 184.5,512.8 186.2,524.1 187.8,533.7 189.5,541.9 191.2,549.0 192.8,555.2 194.4,560.6 195.9,565.5 197.5,569.8 199.0,573.7 200.5,577.2 202.0,580.4 203.5,583.2 205.0,585.9 206.4,588.3 207.9,590.5 209.3,592.6 210.7,594.5 212.0,596.2 213.4,597.9 214.8,599.4 216.1,600.8 217.4,602.2 218.7,603.4 220.0,604.6 221.3,605.7 222.5,606.8 223.8,607.8 225.0,608.7 226.2,609.6 227.5,610.4 228.7,611.2 229.9,612.0 231.0,612.7 232.2,613.4 233.3,614.0 234.5,614.7 235.6,615.3 236.7,615.8 237.9,616.4 239.0,616.9 240.1,617.4 241.1,617.9 242.2,618.4 243.3,618.8 244.3,619.2 245.4,619.6 246.4,620.0 247.4,620.4 248.5,620.8 249.5,621.1 250.5,621.5 251.5,621.8 252.5,622.1 253.5,622.5 254.5,622.8 255.5,623.1 256.5,623.3 257.5,623.6 258.5,623.9 259.5,624.2 260.5,624.4 261.5,624.7 262.5,624.9 263.5,625.2 264.5,625.4 265.5,625.7 266.5,625.9 267.5,626.1 268.5,626.3 269.5,626.5 270.5,626.7 271.5,626.9 272.5,627.1 273.5,627.3 274.5,627.5 275.5,627.7 276.5,627.9 277.5,628.0 278.5,628.2 279.5,628.4 280.5,628.5 281.5,628.7 282.5,628.9 283.5,629.0 284.5,629.2 285.5,629.3 286.5,629.4 287.5,629.6 288.5,629.7 289.5,629.9 290.5,630.0 291.5,630.1 292.5,630.2 293.5,630.4 294.5,630.5 295.5,630.6 296.5,630.7 297.5,630.8 298.5,630.9 299.5,631.0 300.5,631.1 301.5,631.2 302.5,631.3 303.5,631.4 304.5,631.5 305.5,631.6 306.5,631.7 307.5,631.8 308.5,631.9 309.5,632.0 310.5,632.1 311.5,632.1 312.5,632.2 313.5,632.3 314.5,632.4 315.5,632.5 316.5,632.5 317.5,632.6 318.5,632.7 319.5,632.7 320.5,632.8 321.5,632.9 322.5,632.9 323.5,633.0 324.5,633.1 325.5,633.1 326.5,633.2 327.5,633.2 328.5,633.3 329.5,633.3 330.5,633.4 331.5,633.4 332.5,633.5 333.5,633.5 334.5,633.6 335.5,633.6 336.5,633.7 337.5,633.7 338.5,633.8 339.5,633.8 340.5,633.8 341.5,633.9 342.5,633.9 343.5,634.0 344.5,634.0 345.5,634.0 346.5,634.1 347.5,634.1 348.5,634.1 349.5,634.2 350.5,634.2 351.5,634.2 352.5,634.2 353.5,634.3 354.5,634.3 355.5,634.3 356.5,634.3 357.5,634.4 358.5,634.4 359.5,634.4 360.5,634.4 361.5,634.5 362.5,634.5 363.5,634.5 364.5,634.5 365.5,634.5 366.5,634.5 367.5,634.5 368.5,634.6 369.5,634.6 370.5,634.6 371.5,634.6 372.5,634.6 373.5,634.6 374.5,634.6 375.5,634.6 376.5,634.6 377.5,634.6 378.5,634.6 379.5,634.6 380.5,634.6 381.5,634.6 382.5,634.6 383.5,634.6 384.5,634.6 385.5,634.6 386.5,634.6 387.5,634.6 388.5,634.6 389.5,634.6 390.5,634.6 391.5,634.6 392.5,634.6 393.5,634.6 394.5,634.5 395.5,634.5 396.5,634.5 397.5,634.5 398.5,634.6 399.5,634.7 400.5,634.7 401.5,634.7 402.5,634.7 403.5,634.7 404.5,634.6 405.5,634.4 406.5,634.3 407.5,634.2 408.5,634.1 409.5,634.1 410.5,634.1 411.5,634.1 412.5,634.1 413.5,634.1 414.5,634.1 415.5,634.0 416.5,634.0 417.5,633.9 418.5,633.8 419.5,633.8 420.5,633.7 421.5,633.7 422.5,633.8 423.5,633.8 424.5,633.9 425.5,634.0 426.5,634.0 427.5,634.0 428.5,633.9 429.5,633.8 430.5,633.7 431.5,633.6 432.5,633.5 433.5,633.4 434.5,633.4 435.5,633.3 436.5,633.3 437.5,633.3 438.5,633.3 439.5,633.2 440.5,633.1 441.5,632.9 442.5,632.8 443.5,632.7 444.5,632.6 445.5,632.5 446.5,632.5 447.5,632.5 448.5,632.6 449.5,632.6 450.5,632.6 451.5,632.6 452.5,632.6 453.5,632.5 454.5,632.4 455.5,632.3 456.5,632.2 457.5,632.1 458.5,632.1 459.5,632.1 460.5,632.1 461.5,632.1 462.5,632.0 463.5,631.9 464.5,631.8 465.5,631.7 466.5,631.5 467.5,631.3 468.5,631.1 469.5,630.9 470.5,630.8 471.5,630.7 472.5,630.6 473.5,630.5 474.5,630.3 475.5,630.1 476.5,629.9 477.5,629.7 478.5,629.4 479.5,629.1 480.5,628.9 481.5,628.7 482.5,628.4 483.5,628.1 484.5,627.6 485.5,627.1 486.5,626.6 487.5,626.2 488.5,626.2 489.5,626.6 490.5,627.2 491.5,628.0 492.5,628.7 493.5,629.2 494.5,629.6 495.5,629.8 496.5,630.0 497.5,630.0 498.5,630.0 499.5,629.8 500.5,629.7 501.5,629.4 502.5,629.2 503.5,628.9 504.5,628.7 505.5,628.5 506.5,628.4 507.5,628.3 508.5,628.3 509.5,628.3 510.5,628.4 511.5,628.4 512.5,628.3 513.5,628.3 514.5,628.2 515.5,628.1 516.5,627.9 517.5,627.8 518.5,627.7 519.5,627.6 520.5,627.6 521.5,627.5 522.5,627.5 523.5,627.4 524.5,627.3 525.5,627.2 526.5,627.1 527.5,626.9 528.5,626.7 529.5,626.6 530.5,626.4 531.5,626.4 532.5,626.3 533.5,626.3 534.5,626.3 535.5,626.3 536.5,626.3 537.5,626.3 538.5,626.2 539.5,626.1 540.5,626.0 541.5,625.9 542.5,625.8 543.5,625.7 544.5,625.7 545.5,625.7 546.5,625.7 547.5,625.7 548.5,625.6 549.5,625.6 550.5,625.4 551.5,625.3 552.5,625.1 553.5,624.9 554.5,624.7 555.5,624.6 556.5,624.5 557.5,624.5 558.5,624.4 559.5,624.4 560.5,624.3 561.5,624.3 562.5,624.2 563.5,624.1 564.5,623.9 565.5,623.8 566.5,623.7 567.5,623.7 568.5,623.6 569.5,623.6 570.5,623.6 571.5,623.6 572.5,623.6 573.5,623.6 574.5,623.5 575.5,623.4 576.5,623.2 577.5,623.1 578.5,622.9 579.5,622.7 580.5,622.6 581.5,622.5 582.5,622.5 583.5,622.4 584.5,622.3 585.5,622.2 586.5,622.1 587.5,621.9 588.5,621.8 589.5,621.6 590.5,621.4 591.5,621.3 592.5,621.2 593.5,621.1 594.5,621.1 595.5,621.1 596.5,621.1 597.5,621.0 598.5,621.0 599.5,620.9 600.5,620.7 601.5,620.6 602.5,620.4 603.5,620.3 604.5,620.1 605.5,620.0 606.5,619.9 607.5,619.9 608.5,619.8 609.5,619.7 610.5,619.5 611.5,619.3 612.5,619.1 613.5,618.9 614.5,618.6 615.5,618.4 616.5,618.2 617.5,618.1 618.5,618.0 619.5,617.9 620.5,617.8 621.5,617.7 622.5,617.6 623.5,617.5 624.5,617.3 625.5,617.1 626.5,616.9 627.5,616.8 628.5,616.6 629.5,616.5 630.5,616.4 631.5,616.3 632.5,616.2 633.5,616.1 634.5,616.0 635.5,615.8 636.5,615.5 637.5,615.3 638.5,615.0 639.5,614.7 640.5,614.4 641.5,614.2 642.5,614.0 643.5,613.8 644.5,613.7 645.5,613.5 646.5,613.4 647.5,613.1 648.5,612.9 649.5,612.6 650.5,612.4 651.5,612.1 652.5,611.9 653.5,611.7 654.5,611.5 655.5,611.4 656.5,611.3 657.5,611.2 658.5,611.0 659.5,610.8 660.5,610.6 661.5,610.3 662.5,610.1 663.5,609.7 664.5,609.5 665.5,609.2 666.5,608.9 667.5,608.7 668.5,608.5 669.5,608.3 670.5,608.0 671.5,607.8 672.5,607.5 673.5,607.1 674.5,606.8 675.5,606.4 676.5,606.1 677.5,605.8 678.5,605.5 679.5,605.3 680.5,605.1 681.5,605.0 682.5,604.8 683.5,604.6 684.5,604.3 685.5,604.0 686.5,603.7 687.5,603.4 688.5,603.1 689.5,602.8 690.5,602.5 691.5,602.3 692.5,602.0 693.5,601.8 694.5,601.6 695.5,601.3 696.5,601.0 697.5,600.6 698.5,600.2 699.5,599.8 700.5,599.4 701.5,599.0 702.5,598.6 703.5,598.3 704.5,598.0 705.5,597.8 706.5,597.5 707.5,597.3 708.5,597.0 709.5,596.6 710.5,596.3 711.5,595.9 712.5,595.6 713.5,595.2 714.5,594.9 715.5,594.6 716.5,594.4 717.5,594.2 718.5,593.9 719.5,593.7 720.5,593.4 721.5,593.0 722.5,592.6 723.5,592.2 724.5,591.8 725.5,591.4 726.5,591.0 727.5,590.6 728.5,590.3 729.5,589.9 730.5,589.6 731.5,589.3 732.5,589.0 733.5,588.6 734.5,588.2 735.5,587.8 736.5,587.3 737.5,586.9 738.5,586.5 739.5,586.2 740.5,585.9 741.5,585.7 742.5,585.4 743.5,585.1 744.5,584.9 745.5,584.5 746.5,584.2 747.5,583.8 748.5,583.4 749.5,583.0 750.5,582.6 751.5,582.2 752.5,581.8 753.5,581.5 754.5,581.2 755.5,580.9 756.5,580.5 757.5,580.1 758.5,579.7 759.5,579.2 760.5,578.8 761.5,578.3 762.5,577.8 763.5,577.4 764.5,577.1 765.5,576.7 766.5,576.4 767.5,576.1 768.5,575.8 769.5,575.5 770.5,575.1 771.5,574.8 772.5,574.3 773.5,573.9 774.5,573.5 775.5,573.1 776.5,572.8 777.5,572.5 778.5,572.2 779.5,571.9 780.5,571.5 781.5,571.2 782.5,570.8 783.5,570.3 784.5,569.8 785.5,569.3 786.5,568.8 787.5,568.4 788.5,567.9 789.5,567.5 790.5,567.2 791.5,566.8 792.5,566.5 793.5,566.1 794.5,565.7 795.5,565.2 796.5,564.7 797.5,564.2 798.5,563.7 799.5,563.2 800.5,562.8 801.5,562.4 802.5,562.0 803.5,561.6 804.5,561.3 805.5,560.9 806.5,560.5 807.5,560.0 808.5,559.5 809.5,559.0 810.5,558.5 811.5,557.9 812.5,557.4 813.5,557.0 814.5,556.5 815.5,556.1 816.5,555.7 817.5,555.3 818.5,554.8 819.5,554.3 820.5,553.8 821.5,553.2 822.5,552.7 823.5,552.2 824.5,551.7 825.5,551.2 826.5,550.8 827.5,550.5 828.5,550.1 829.5,549.8 830.5,549.4 831.5,548.9 832.5,548.5 833.5,548.0 834.5,547.5 835.5,547.0 836.5,546.5 837.5,546.0 838.5,545.6 839.5,545.2 840.5,544.8 841.5,544.4 842.5,543.9 843.5,543.4 844.5,542.8 845.5,542.3 846.5,541.7 847.5,541.1 848.5,540.6 849.5,540.0 850.5,539.6 851.5,539.1 852.5,538.7 853.5,538.3 854.5,537.8 855.5,537.3 856.5,536.8 857.5,536.3 858.5,535.8 859.5,535.2 860.5,534.7 861.5,534.2 862.5,533.8 863.5,533.3 864.5,532.9 865.5,532.5 866.5,532.0 867.5,531.5 868.5,530.9 869.5,530.3 870.5,529.7 871.5,529.1 872.5,528.4 873.5,527.8 874.5,527.2 875.5,526.7 876.5,526.2 877.5,525.6 878.5,525.1 879.5,524.5 880.5,523.9 881.5,523.3 882.5,522.6 883.5,522.0 884.5,521.3 885.5,520.7 886.5,520.1 887.5,519.6 888.5,519.1 889.5,518.6 890.5,518.0 891.5,517.5 892.5,516.9 893.5,516.2 894.5,515.5 895.5,514.8 896.5,514.1 897.5,513.4 898.5,512.7 899.5,512.0 900.5,511.4 901.5,510.7 902.5,510.1 903.5,509.4 904.5,508.6 905.5,507.8 906.0,507.4" fill="none" stroke="#000" stroke-width="2" stroke-linejoin="round" shape-rendering="crispEdges"/><rect x="164" y="157" width="1" height="501" fill="#c8c800" shape-rendering="crispEdges"/><g shape-rendering="crispEdges" fill="#000"><rect x="69" y="155" width="838" height="2"/><rect x="69" y="658" width="838" height="2"/><rect x="69" y="155" width="2" height="505"/><rect x="905" y="155" width="2" height="505"/></g></svg>
<div class="t " style="left:28.60px;top:146.66px;font-size:15.4px;color:#000;transform:scaleX(0.9300);transform-origin:0 0;">144.0</div>
<div class="t " style="left:28.67px;top:196.66px;font-size:15.4px;color:#000;transform:scaleX(0.9300);transform-origin:0 0;">129.6</div>
<div class="t " style="left:29.89px;top:247.66px;font-size:15.4px;color:#000;transform:scaleX(0.9300);transform-origin:0 0;">115.2</div>
<div class="t " style="left:28.67px;top:297.66px;font-size:15.4px;color:#000;transform:scaleX(0.9300);transform-origin:0 0;">100.8</div>
<div class="t " style="left:36.47px;top:347.66px;font-size:15.4px;color:#000;transform:scaleX(0.9300);transform-origin:0 0;">86.4</div>
<div class="t " style="left:36.54px;top:398.66px;font-size:15.4px;color:#000;transform:scaleX(0.9300);transform-origin:0 0;">72.0</div>
<div class="t " style="left:36.62px;top:448.66px;font-size:15.4px;color:#000;transform:scaleX(0.9300);transform-origin:0 0;">57.6</div>
<div class="t " style="left:36.76px;top:498.66px;font-size:15.4px;color:#000;transform:scaleX(0.9300);transform-origin:0 0;">43.2</div>
<div class="t " style="left:36.62px;top:548.66px;font-size:15.4px;color:#000;transform:scaleX(0.9300);transform-origin:0 0;">28.8</div>
<div class="t " style="left:36.47px;top:599.66px;font-size:15.4px;color:#000;transform:scaleX(0.9300);transform-origin:0 0;">14.4</div>
<div class="t " style="left:44.49px;top:649.66px;font-size:15.4px;color:#000;transform:scaleX(0.9300);transform-origin:0 0;">0.0</div>
<div class="t " style="left:915.34px;top:146.66px;font-size:15.4px;color:#000;transform:scaleX(0.9540);transform-origin:0 0;">90.0</div>
<div class="t " style="left:915.71px;top:196.66px;font-size:15.4px;color:#000;transform:scaleX(0.9414);transform-origin:0 0;">45.0</div>
<div class="t " style="left:920.45px;top:247.66px;font-size:15.4px;color:#000;transform:scaleX(0.8888);transform-origin:0 0;">0.0</div>
<div class="t " style="left:911.34px;top:297.66px;font-size:15.4px;color:#000;transform:scaleX(0.9504);transform-origin:0 0;">-45.0</div>
<div class="t " style="left:911.34px;top:347.66px;font-size:15.4px;color:#000;transform:scaleX(0.9504);transform-origin:0 0;">-90.0</div>
<div class="t " style="left:912.00px;top:405.93px;font-size:15.2px;color:#000;transform:scaleX(0.9388);transform-origin:0 0;">Avg:Exp</div>
<div class="t " style="left:61.94px;top:665.66px;font-size:15.4px;color:#000;transform:scaleX(0.9300);transform-origin:0 0;">20</div>
<div class="t " style="left:172.91px;top:665.66px;font-size:15.4px;color:#000;transform:scaleX(0.9300);transform-origin:0 0;">50</div>
<div class="t " style="left:252.57px;top:665.66px;font-size:15.4px;color:#000;transform:scaleX(0.9300);transform-origin:0 0;">100</div>
<div class="t " style="left:336.64px;top:665.66px;font-size:15.4px;color:#000;transform:scaleX(0.9300);transform-origin:0 0;">200</div>
<div class="t " style="left:447.60px;top:665.66px;font-size:15.4px;color:#000;transform:scaleX(0.9300);transform-origin:0 0;">500</div>
<div class="t " style="left:535.35px;top:665.66px;font-size:15.4px;color:#000;transform:scaleX(0.9300);transform-origin:0 0;">1k</div>
<div class="t " style="left:619.42px;top:665.66px;font-size:15.4px;color:#000;transform:scaleX(0.9300);transform-origin:0 0;">2k</div>
<div class="t " style="left:730.38px;top:665.66px;font-size:15.4px;color:#000;transform:scaleX(0.9300);transform-origin:0 0;">5k</div>
<div class="t " style="left:810.05px;top:665.66px;font-size:15.4px;color:#000;transform:scaleX(0.9300);transform-origin:0 0;">10k</div>
<div class="t " style="left:895.11px;top:665.66px;font-size:15.4px;color:#000;transform:scaleX(0.9300);transform-origin:0 0;">20k</div>
<div class="t " style="left:72.17px;top:134.53px;font-size:15.2px;color:#000;transform:scaleX(0.9702);transform-origin:0 0;">|Z| (ohm)</div>
<div class="t " style="left:448.29px;top:134.53px;font-size:15.2px;color:#000;transform:scaleX(1.0327);transform-origin:0 0;">Impedance</div>
<div class="t " style="left:838.44px;top:134.53px;font-size:15.2px;color:#000;transform:scaleX(1.0353);transform-origin:0 0;">Phase (°)</div>
<div class="t " style="left:70.27px;top:687.73px;font-size:15.2px;color:#000;transform:scaleX(0.9644);transform-origin:0 0;">Cursor: 43.57 Hz, 140.35 Ohm, 9.1 deg</div>
<div class="t " style="left:868.26px;top:687.73px;font-size:15.2px;color:#000;transform:scaleX(1.0169);transform-origin:0 0;">F(Hz)</div>
<div class="t " style="left:911.64px;top:589.63px;font-size:15.2px;color:#000;transform:scaleX(0.9500);transform-origin:0 0;">L</div>
<div class="t " style="left:911.50px;top:604.63px;font-size:15.2px;color:#000;transform:scaleX(0.9500);transform-origin:0 0;">I</div>
<div class="t " style="left:911.64px;top:619.63px;font-size:15.2px;color:#000;transform:scaleX(0.9500);transform-origin:0 0;">M</div>
<div class="t " style="left:911.64px;top:634.63px;font-size:15.2px;color:#000;transform:scaleX(0.9500);transform-origin:0 0;">P</div>
<div class="t " style="left:989.63px;top:115.01px;font-size:11.5px;color:#000;transform:scaleX(0.9420);transform-origin:0 0;">Max</div>
<div class="" style="position:absolute;left:990px;top:134px;width:19px;height:34px;background:#fff;"></div>
<div class="spin" style="left:991px;top:135px;width:17px;height:32px;"></div>
<svg style="left:0;top:0" width="1022" height="734" viewBox="0 0 1022 734"><path d="M995.90 144.50L997.20 145.80L999.50 143.70L1001.80 145.80L1003.10 144.50L999.50 141.00Z" fill="#4d6185"/><path d="M995.90 157.50L997.20 156.20L999.50 158.30L1001.80 156.20L1003.10 157.50L999.50 161.00Z" fill="#4d6185"/></svg>
<div class="btn" style="left:988px;top:185px;width:24px;height:19px"></div>
<div class="t " style="left:991.95px;top:185.01px;font-size:11.5px;color:#000;transform:scaleX(1.1453);transform-origin:0 0;">Fit</div>
<div class="t " style="left:990.15px;top:211.01px;font-size:11.5px;color:#000;transform:scaleX(0.9200);transform-origin:0 0;">Min</div>
<div class="" style="position:absolute;left:990px;top:230px;width:19px;height:34px;background:#fff;"></div>
<div class="spin" style="left:991px;top:231px;width:17px;height:32px;"></div>
<svg style="left:0;top:0" width="1022" height="734" viewBox="0 0 1022 734"><path d="M995.90 240.50L997.20 241.80L999.50 239.70L1001.80 241.80L1003.10 240.50L999.50 237.00Z" fill="#4d6185"/><path d="M995.90 253.50L997.20 252.20L999.50 254.30L1001.80 252.20L1003.10 253.50L999.50 257.00Z" fill="#4d6185"/></svg>
<div class="btn" style="left:988px;top:280px;width:24px;height:19px"></div>
<div class="t " style="left:991.53px;top:280.01px;font-size:11.5px;color:#000;transform:scaleX(0.9175);transform-origin:0 0;">Set</div>
<div class="t " style="left:982.63px;top:310.01px;font-size:11.5px;color:#000;transform:scaleX(0.9442);transform-origin:0 0;">FrHigh</div>
<div class="" style="position:absolute;left:985px;top:332px;width:30px;height:16px;background:#fff;"></div>
<div class="spin" style="left:986px;top:333px;width:28px;height:14px;background:linear-gradient(to bottom,#d2defb 0%,#c3d3fa 55%,#b4c6f4 100%)"></div>
<div class="" style="position:absolute;left:999.5px;top:334px;width:1px;height:12px;background:rgba(255,255,255,0.35);"></div>
<svg style="left:0;top:0" width="1022" height="734" viewBox="0 0 1022 734"><path d="M994.80 336.40L996.10 337.70L994.00 340.00L996.10 342.30L994.80 343.60L991.30 340.00Z" fill="#4d6185"/><path d="M1005.20 336.40L1003.90 337.70L1006.00 340.00L1003.90 342.30L1005.20 343.60L1008.70 340.00Z" fill="#4d6185"/></svg>
<div class="t " style="left:986.17px;top:354.51px;font-size:11.5px;color:#000;transform:scaleX(0.9018);transform-origin:0 0;">FrLow</div>
<div class="" style="position:absolute;left:985px;top:374px;width:30px;height:16px;background:#fff;"></div>
<div class="spin" style="left:986px;top:375px;width:28px;height:14px;background:linear-gradient(to bottom,#d2defb 0%,#c3d3fa 55%,#b4c6f4 100%)"></div>
<div class="" style="position:absolute;left:999.5px;top:376px;width:1px;height:12px;background:rgba(255,255,255,0.35);"></div>
<svg style="left:0;top:0" width="1022" height="734" viewBox="0 0 1022 734"><path d="M994.80 378.40L996.10 379.70L994.00 382.00L996.10 384.30L994.80 385.60L991.30 382.00Z" fill="#4d6185"/><path d="M1005.20 378.40L1003.90 379.70L1006.00 382.00L1003.90 384.30L1005.20 385.60L1008.70 382.00Z" fill="#4d6185"/></svg>
<div class="" style="position:absolute;left:0px;top:712px;width:1022px;height:20px;background:linear-gradient(to bottom,#b3b0a0 0px,#b3b0a0 1px,#d6d3c3 1px,#d6d3c3 2px,#ebe8d8 2px,#ebe8d8 3px,#f3f1e5 3px,#f3f1e5 5px,#efecde 6px,#ece9d8 8px,#ece9d8 100%);"></div>
<div class="t " style="left:1.03px;top:713.67px;font-size:12.5px;color:#000;transform:scaleX(0.9680);transform-origin:0 0;">Ready</div>
<div class="" style="position:absolute;left:916px;top:716px;width:1px;height:14px;background:#c5c2b2;"></div>
<div class="" style="position:absolute;left:917px;top:716px;width:1px;height:14px;background:#fff;"></div>
<div class="" style="position:absolute;left:974px;top:716px;width:1px;height:14px;background:#c5c2b2;"></div>
<div class="" style="position:absolute;left:975px;top:716px;width:1px;height:14px;background:#fff;"></div>
<div class="t " style="left:866.39px;top:713.67px;font-size:12.5px;color:#000;transform:scaleX(1.1125);transform-origin:0 0;">L:-7.4</div>
<div class="t " style="left:924.90px;top:713.67px;font-size:12.5px;color:#000;transform:scaleX(1.0965);transform-origin:0 0;">R:-0.2</div>
<div class="t " style="left:983.53px;top:713.67px;font-size:12.5px;color:#000;transform:scaleX(0.9441);transform-origin:0 0;">dBFS</div>
<div class="" style="position:absolute;left:0px;top:732px;width:1022px;height:2px;background:#3a80f0;"></div>
<div class="" style="position:absolute;left:0px;top:732px;width:100px;height:2px;background:linear-gradient(to right,#2f8f2f,#3c9a3c);"></div>
<div class="" style="position:absolute;left:100px;top:732px;width:735px;height:2px;background:#3c81f3;"></div>
<div class="" style="position:absolute;left:822px;top:732px;width:13px;height:2px;background:#1941a5;"></div>
<div class="" style="position:absolute;left:835px;top:732px;width:187px;height:2px;background:#1290e8;"></div>
<div id="dlg" style="position:absolute;left:320px;top:156px;width:524px;height:442px;box-sizing:border-box;border-radius:7px 7px 0 0;background:#0831d9;overflow:hidden;">
<div style="position:absolute;left:0;top:0;width:524px;height:33px;background:linear-gradient(to bottom,#0a55de 0%,#2f88fb 5%,#2a86fc 9%,#1274f6 13%,#0365f0 17%,#0059e8 24%,#0054e3 32%,#0055e6 55%,#005bf2 68%,#0266fc 80%,#0262f2 88%,#0052d8 94%,#0042b8 100%);"></div>
<div style="position:absolute;left:510px;top:0;width:14px;height:33px;background:linear-gradient(to right,rgba(0,30,150,0) 0%,rgba(0,30,150,0.15) 55%,rgba(0,25,140,0.6) 100%);"></div>
<div style="position:absolute;left:0;top:0;width:6px;height:33px;background:linear-gradient(to left,rgba(0,30,150,0) 0%,rgba(0,25,140,0.45) 100%);"></div>
<div style="position:absolute;left:0;top:33px;width:3px;height:409px;background:linear-gradient(to right,#0831d9 0,#0831d9 1px,#166aee 1px,#166aee 2px,#0855dd 2px);"></div>
<div style="position:absolute;left:521px;top:33px;width:3px;height:409px;background:linear-gradient(to right,#0855e0 0,#0855e0 1px,#0030c8 1px,#0030c8 2px,#001590 2px);"></div>
<div style="position:absolute;left:0;top:439px;width:524px;height:3px;background:linear-gradient(to bottom,#0855e0 0,#0855e0 1px,#0030c0 1px,#0030c0 2px,#001590 2px);"></div>
<div style="position:absolute;left:3px;top:33px;width:518px;height:406px;background:#ece9d8;"></div>
</div>
<div class="t " style="left:326.63px;top:164.24px;font-size:19.5px;color:#fff;font-weight:bold;transform:scaleX(0.9197);transform-origin:0 0;text-shadow:1px 1px 0 #0a2a8a;">Loudspeaker</div>
<div class="t " style="left:446.09px;top:164.24px;font-size:19.5px;color:#fff;font-weight:bold;transform:scaleX(0.9507);transform-origin:0 0;text-shadow:1px 1px 0 #0a2a8a;">Parameters</div>
<div class="t " style="left:553.59px;top:164.24px;font-size:19.5px;color:#fff;font-weight:bold;transform:scaleX(1.1664);transform-origin:0 0;text-shadow:1px 1px 0 #0a2a8a;">-</div>
<div class="t " style="left:566.29px;top:164.24px;font-size:19.5px;color:#fff;font-weight:bold;transform:scaleX(0.9113);transform-origin:0 0;text-shadow:1px 1px 0 #0a2a8a;">Closed</div>
<div class="t " style="left:629.43px;top:164.24px;font-size:19.5px;color:#fff;font-weight:bold;transform:scaleX(0.9242);transform-origin:0 0;text-shadow:1px 1px 0 #0a2a8a;">Box</div>
<div class="t " style="left:669.37px;top:164.24px;font-size:19.5px;color:#fff;font-weight:bold;transform:scaleX(0.9702);transform-origin:0 0;text-shadow:1px 1px 0 #0a2a8a;">Method</div>
<div class="" style="position:absolute;left:814px;top:161px;width:25px;height:25px;box-sizing:border-box;border:1px solid #fff;border-radius:3px;background:linear-gradient(135deg,#ea8866 0%,#e15a32 30%,#d84a20 65%,#c03810 100%);"></div>
<svg style="left:814px;top:161px" width="25" height="25" viewBox="0 0 25 25"><path d="M6 6L19 19M19 6L6 19" stroke="#fff" stroke-width="3"/></svg>
<div class="edit" style="left:332px;top:200px;width:248px;height:380px"></div>
<div class="" style="position:absolute;left:560px;top:201px;width:19px;height:378px;background:linear-gradient(to right,#f1efe6 0%,#f6f5ef 35%,#fdfdfb 80%,#ffffff 100%);"></div>
<div class="" style="position:absolute;left:560px;top:202px;width:18px;height:18px;border-radius:3px;background:#fff;"></div>
<div class="" style="position:absolute;left:562px;top:218px;width:15px;height:2px;border-radius:0 0 2px 2px;background:#d3d1c0;"></div>
<div class="" style="position:absolute;left:561px;top:203px;width:16px;height:16px;box-sizing:border-box;border:1px solid #e6e5da;border-radius:2px;background:linear-gradient(to bottom,#f3f2ea,#eae9df);"></div>
<svg style="left:0;top:0" width="1022" height="734" viewBox="0 0 1022 734"><path d="M565.10 212.40L566.40 213.70L568.70 211.60L571.00 213.70L572.30 212.40L568.70 208.90Z" fill="#c9c7ba" transform="translate(568.7 211) scale(1.15) translate(-568.7 -211)"/></svg>
<div class="" style="position:absolute;left:560px;top:559px;width:18px;height:18px;border-radius:3px;background:#fff;"></div>
<div class="" style="position:absolute;left:562px;top:575px;width:15px;height:2px;border-radius:0 0 2px 2px;background:#d3d1c0;"></div>
<div class="" style="position:absolute;left:561px;top:560px;width:16px;height:16px;box-sizing:border-box;border:1px solid #e6e5da;border-radius:2px;background:linear-gradient(to bottom,#f3f2ea,#eae9df);"></div>
<svg style="left:0;top:0" width="1022" height="734" viewBox="0 0 1022 734"><path d="M565.10 566.60L566.40 565.30L568.70 567.40L571.00 565.30L572.30 566.60L568.70 570.10Z" fill="#c9c7ba" transform="translate(568.7 568) scale(1.15) translate(-568.7 -568)"/></svg>
<div class="t " style="left:337.05px;top:200.01px;font-size:11.5px;color:#000;transform:scaleX(0.9239);transform-origin:0 0;">Loudspeaker Parameters</div>
<div class="t " style="left:337.03px;top:213.01px;font-size:11.5px;color:#000;transform:scaleX(0.9497);transform-origin:0 0;">Fs  = 44.02 Hz</div>
<div class="t " style="left:337.01px;top:226.01px;font-size:11.5px;color:#000;transform:scaleX(0.9725);transform-origin:0 0;">Re  = 6.66 ohm[dc]</div>
<div class="t " style="left:337.02px;top:239.01px;font-size:11.5px;color:#000;transform:scaleX(0.9605);transform-origin:0 0;">Le  = 292.53 uH</div>
<div class="t " style="left:337.02px;top:252.01px;font-size:11.5px;color:#000;transform:scaleX(0.9605);transform-origin:0 0;">L2  = 393.55 uH</div>
<div class="t " style="left:337.02px;top:265.01px;font-size:11.5px;color:#000;transform:scaleX(0.9544);transform-origin:0 0;">R2  = 14.30 ohm</div>
<div class="t " style="left:337.38px;top:278.01px;font-size:11.5px;color:#000;transform:scaleX(1.0038);transform-origin:0 0;">Qt  = 0.50</div>
<div class="t " style="left:337.39px;top:291.01px;font-size:11.5px;color:#000;transform:scaleX(0.9766);transform-origin:0 0;">Qes = 0.53</div>
<div class="t " style="left:337.41px;top:304.01px;font-size:11.5px;color:#000;transform:scaleX(0.9548);transform-origin:0 0;">Qms = 10.68</div>
<div class="t " style="left:337.02px;top:330.01px;font-size:11.5px;color:#000;transform:scaleX(0.9613);transform-origin:0 0;">Load overlay data,</div>
<div class="t " style="left:337.74px;top:343.01px;font-size:11.5px;color:#000;transform:scaleX(0.9375);transform-origin:0 0;">to calculate all parameters!</div>
<div class="grp" style="left:595px;top:203px;width:236px;height:164px"></div>
<div class="" style="position:absolute;left:601px;top:201px;width:56.5px;height:5px;background:#ece9d8;"></div>
<div class="t " style="left:603.16px;top:194.01px;font-size:11.5px;color:#0046d5;transform:scaleX(0.9694);transform-origin:0 0;">User Input</div>
<div class="grp" style="left:593px;top:384px;width:237px;height:131px"></div>
<div class="" style="position:absolute;left:599px;top:382px;width:132.5px;height:5px;background:#ece9d8;"></div>
<div class="t " style="left:601.17px;top:375.01px;font-size:11.5px;color:#0046d5;transform:scaleX(0.9061);transform-origin:0 0;">Nonlinear LSE Optimization</div>
<div class="t " style="left:612.45px;top:225.01px;font-size:11.5px;color:#000;transform:scaleX(0.9142);transform-origin:0 0;">Voice coil Resistance (ohm)</div>
<div class="edit" style="left:764px;top:223px;width:50px;height:20px"></div>
<div class="t " style="left:768.92px;top:223.01px;font-size:11.5px;color:#000;">6</div>
<div class="t " style="left:624.14px;top:256.01px;font-size:11.5px;color:#000;transform:scaleX(0.9296);transform-origin:0 0;">Membrane diameter (cm)</div>
<div class="edit" style="left:766px;top:254px;width:48px;height:23px"></div>
<div class="t " style="left:771.10px;top:254.01px;font-size:11.5px;color:#000;transform:scaleX(1.0487);transform-origin:0 0;">16</div>
<div class="t " style="left:634.46px;top:290.01px;font-size:11.5px;color:#000;transform:scaleX(0.9379);transform-origin:0 0;">Closed box volume (lit)</div>
<div class="edit" style="left:766px;top:288px;width:48px;height:23px;background:#ece9d8"></div>
<div class="t " style="left:771.42px;top:288.01px;font-size:11.5px;color:#aca899;">7</div>
<div class="t " style="left:635.61px;top:325.01px;font-size:11.5px;color:#000;transform:scaleX(0.9626);transform-origin:0 0;">Driver mounted in infinite baffle</div>
<div class="chk" style="left:791px;top:328px"></div>
<div class="t " style="left:629.68px;top:400.01px;font-size:11.5px;color:#000;transform:scaleX(0.8901);transform-origin:0 0;">Estimate TSP by LSE minimization</div>
<div class="chk" style="left:791px;top:403px"></div>
<svg style="left:791px;top:403px" width="13" height="13" viewBox="0 0 13 13"><path d="M3 6L5.5 8.5L10 3.5" fill="none" stroke="#21a121" stroke-width="2.2"/></svg>
<div class="t " style="left:631.65px;top:426.01px;font-size:11.5px;color:#000;transform:scaleX(0.9225);transform-origin:0 0;">Estimate voice coil resistance Re</div>
<div class="chk" style="left:791px;top:429px"></div>
<svg style="left:791px;top:429px" width="13" height="13" viewBox="0 0 13 13"><path d="M3 6L5.5 8.5L10 3.5" fill="none" stroke="#21a121" stroke-width="2.2"/></svg>
<div class="t " style="left:644.65px;top:452.01px;font-size:11.5px;color:#000;transform:scaleX(0.9288);transform-origin:0 0;">Estimate lossy inductor model</div>
<div class="chk" style="left:790px;top:455px"></div>
<svg style="left:790px;top:455px" width="13" height="13" viewBox="0 0 13 13"><path d="M3 6L5.5 8.5L10 3.5" fill="none" stroke="#21a121" stroke-width="2.2"/></svg>
<div class="edit" style="left:664px;top:482px;width:140px;height:21px"></div>
<div class="dd" style="left:785px;top:484px;width:17px;height:17px"></div>
<svg style="left:788.5px;top:489.0px" width="10" height="8" viewBox="0 0 10 8"><path d="M1.2 1.6L5 5.4L8.8 1.6" fill="none" stroke="#4d6185" stroke-width="2.1"/></svg>
<div class="t " style="left:666.59px;top:483.01px;font-size:11.5px;color:#000;transform:scaleX(0.9940);transform-origin:0 0;">Le + L2||R2</div>
<div class="btn" style="left:594px;top:531px;width:91px;height:52px;"></div>
<div style="position:absolute;box-sizing:border-box;left:595px;top:532px;width:89px;height:50px;border-radius:2px;border:2px solid;border-color:#cedcfa #a4bdf2 #7596e6 #a4bdf2;"></div>
<div class="t " style="left:616.47px;top:541.01px;font-size:11.5px;color:#000;transform:scaleX(0.9282);transform-origin:0 0;">Calculate</div>
<div class="t " style="left:611.29px;top:554.01px;font-size:11.5px;color:#000;transform:scaleX(0.9555);transform-origin:0 0;">parameters</div>
<div class="btn" style="left:695px;top:530px;width:63px;height:24px;"></div>
<div class="t " style="left:708.79px;top:532.01px;font-size:11.5px;color:#000;transform:scaleX(0.9876);transform-origin:0 0;">Export</div>
<div class="btn" style="left:767px;top:530px;width:63px;height:24px;"></div>
<div class="t " style="left:781.47px;top:532.01px;font-size:11.5px;color:#000;transform:scaleX(0.9146);transform-origin:0 0;">Cancel</div>
<div class="btn" style="left:695px;top:561px;width:63px;height:24px;"></div>
<div class="t " style="left:712.96px;top:563.01px;font-size:11.5px;color:#000;transform:scaleX(0.9324);transform-origin:0 0;">Copy</div>
<div class="btn" style="left:767px;top:561px;width:63px;height:24px;"></div>
<div class="t " style="left:790.57px;top:563.01px;font-size:11.5px;color:#000;transform:scaleX(0.8320);transform-origin:0 0;">OK</div>
</div>
</body>
</html>
